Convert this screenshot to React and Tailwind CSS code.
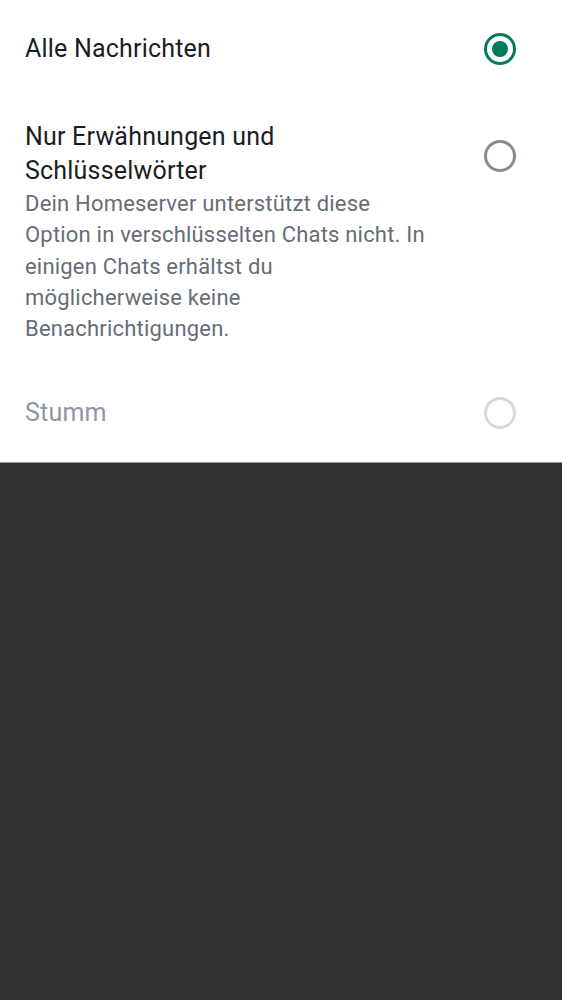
export default function App() {
  const font = { fontFamily: "Roboto, 'Noto Sans', sans-serif" };
  return (
    <div className="w-[562px] h-[1000px] flex flex-col bg-[#323232]" style={font}>
      <div className="bg-white flex flex-col border-b border-[#9a9a9a]">
        <div className="h-[98px] flex items-center justify-between pl-[25px] pr-[46px]">
          <span className="text-[25px] leading-[34px] tracking-[0.2px] text-[#1b1d22]">Alle Nachrichten</span>
          <span className="w-[32px] h-[32px] rounded-full border-[3px] border-[#007a61] flex items-center justify-center">
            <span className="w-[16px] h-[16px] rounded-full bg-[#007a61]" />
          </span>
        </div>
        <div className="flex items-start justify-between pl-[25px] pr-[46px] pt-[22px] pb-[19px]">
          <div className="w-[409px] flex flex-col">
            <span className="text-[25px] leading-[34px] tracking-[0.2px] text-[#1b1d22]">Nur Erwähnungen und Schlüsselwörter</span>
            <span className="text-[22px] leading-[31.3px] tracking-[0.2px] text-[#656d77]">
              Dein Homeserver unterstützt diese Option in verschlüsselten Chats nicht. In einigen Chats erhältst du möglicherweise keine Benachrichtigungen.
            </span>
          </div>
          <span className="mt-[20px] w-[32px] h-[32px] rounded-full border-[3px] border-[#868d96]" />
        </div>
        <div className="h-[99px] flex items-center justify-between pl-[25px] pr-[46px]">
          <span className="text-[25px] leading-[34px] tracking-[0.2px] text-[#8d97a5]">Stumm</span>
          <span className="w-[32px] h-[32px] rounded-full border-[3px] border-[#d5d9df]" />
        </div>
      </div>
    </div>
  );
}
